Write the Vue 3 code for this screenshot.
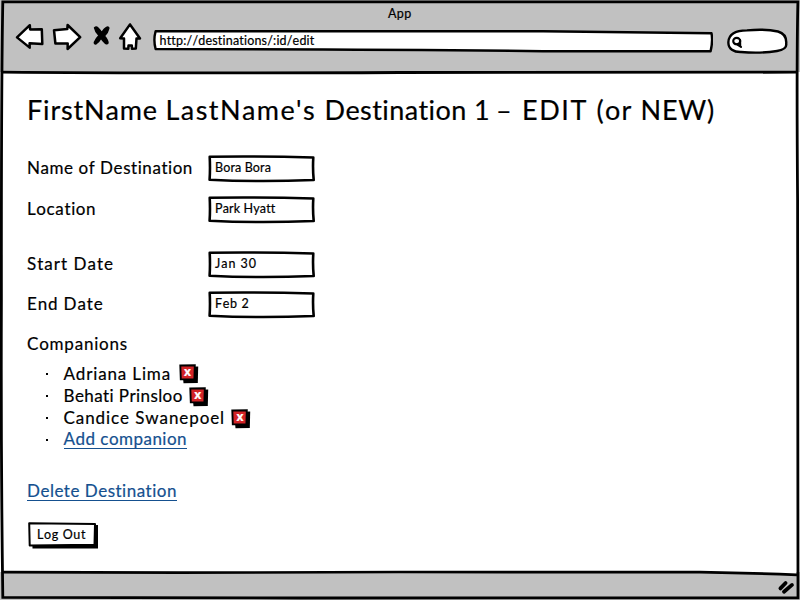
<script setup>
import { ref } from 'vue'

// Tracks a run of text out (or in) to the given advance width in pixels.
const vFit = {
  mounted(el, { value }) {
    const apply = () => {
      el.style.letterSpacing = '0px'
      const natural = el.getBoundingClientRect().width
      el.style.letterSpacing = (value - natural) / el.textContent.length + 'px'
    }
    apply()
    document.fonts.ready.then(apply)
  },
}

const heading = [
  { text: 'FirstName ', width: 138.5 },
  { text: "LastName's ", width: 159 },
  { text: 'Destination ', width: 150.5 },
  { text: '1 ', width: 22 },
  { text: '– ', width: 26 },
  { text: 'EDIT ', width: 74.5 },
  { text: '(or ', width: 44 },
  { text: 'NEW)', width: 74.5 },
]

const fields = ref([
  { label: 'Name of Destination', labelWidth: 166.5, value: 'Bora Bora', valueWidth: 56 },
  { label: 'Location', labelWidth: 69.5, value: 'Park Hyatt', valueWidth: 60 },
  { label: 'Start Date', labelWidth: 87, value: 'Jan 30', valueWidth: 42 },
  { label: 'End Date', labelWidth: 76.5, value: 'Feb 2', valueWidth: 34.5 },
])

const companions = ref([
  { name: 'Adriana Lima', width: 107.5 },
  { name: 'Behati Prinsloo', width: 119.5 },
  { name: 'Candice Swanepoel', width: 161.5 },
])

function remove(i) {
  companions.value.splice(i, 1)
}
</script>

<template>
  <div class="window">
    <header class="chrome">
      <div class="title"><span v-fit="23.5">App</span></div>
      <div class="toolbar">
        <svg class="nav" width="132" height="32" viewBox="14 21 132 32">
          <g fill="#fff" stroke="#000" stroke-width="2.5" stroke-linejoin="round" stroke-linecap="round">
            <path d="M29.8 25.2 L17 37.4 L29.7 47.6 L29.6 43.3 L42.3 44 L41.8 29.3 L30.1 29.4 Z" />
            <path d="M54 30.2 L67.3 29.1 L67.6 25 L80.2 37.2 L67.6 49 L67.7 43.6 L55.4 43.5 Z" />
            <path d="M130 24.4 L120.2 38.3 L124 38.6 L124 48.5 L128.3 48.7 L128.5 45.6 L131.8 45.4 L132 48.7 L135.8 48.6 L136.5 38.6 L140 38.4 Z" />
          </g>
          <path d="M94.6 27.8 Q96.2 26.4 98 28 Q100.8 30.5 101.7 33 Q104 28.4 107 27.2 Q109 26.8 108.8 28.4 Q107.8 33 104.4 36 Q107.9 39.8 108 43 Q107.3 44.4 105.5 43.4 Q102.8 41.2 101 38.2 Q98.8 42.4 95.7 44 Q94.2 43.9 94.4 42.3 Q96 38.5 99 35.6 Q95.2 31.5 94.6 27.8 Z" stroke="#000" stroke-width="1.5" />
        </svg>
        <div class="address">
          <svg class="sketch" viewBox="0 0 560 24">
            <path d="M2.6 2.3 Q280 2 390 2.3 L558.5 4.2 Q560 12 557.6 22.2 L390 22.2 Q230 20.2 2.6 20 Q.2 11 2.6 2.3 Z" fill="#fff" stroke="#000" stroke-width="2.4" stroke-linejoin="round" />
          </svg>
          <span v-fit="155">http://destinations/:id/edit</span>
        </div>
        <svg class="search" width="62" height="28" viewBox="726 27 62 28">
          <path d="M728.4 42 C728.8 34 735 30.5 747 30.4 Q765 28.6 778 31.5 Q787 34 786.2 44 Q787 49.5 777 51 Q761 53.6 741 52 C734 52.2 728 49 728.4 42 Z" fill="#fff" stroke="#000" stroke-width="2.4" />
          <ellipse cx="736.7" cy="41.1" rx="3.5" ry="3.2" fill="none" stroke="#000" stroke-width="2.1" />
          <path d="M737 44.3 L741 46.9 M740.1 40 L740.2 45.4" fill="none" stroke="#000" stroke-width="2.1" stroke-linecap="round" />
        </svg>
      </div>
    </header>

    <main class="page">
      <h1><span v-for="part in heading" :key="part.text" v-fit="part.width">{{ part.text }}</span></h1>

      <div class="form">
        <label v-for="field in fields" :key="field.label" class="field">
          <span class="label"><span v-fit="field.labelWidth">{{ field.label }}</span></span>
          <span class="input">
            <svg class="sketch" viewBox="0 0 107 28">
              <path d="M1.7 1.7 Q55 1 105.3 2.5 Q104.6 14 105.7 25 Q50 27.2 1.6 24.7 Q2.3 14 1.7 1.7 Z" fill="#fff" stroke="#000" stroke-width="2.6" stroke-linejoin="round" />
            </svg>
            <span v-fit="field.valueWidth">{{ field.value }}</span>
          </span>
        </label>
      </div>

      <h2><span v-fit="101">Companions</span></h2>
      <ul class="companions">
        <li v-for="(c, i) in companions" :key="c.name">
          <i class="dot"></i>
          <span v-fit="c.width">{{ c.name }}</span>
          <button class="remove" @click="remove(i)">
            <svg class="sketch" viewBox="0 0 20 20">
              <path d="M3 3 L19.2 2.6 L18.8 19 L4.5 19.2 Z" />
              <path d="M1.3 1.5 L15.8 1.2 L15.4 15.4 L1.8 15.2 Z" fill="#d32427" stroke="#000" stroke-width="1.9" />
            </svg>
            <span>x</span>
          </button>
        </li>
        <li>
          <i class="dot"></i>
          <a v-fit="123.5">Add companion</a>
        </li>
      </ul>

      <a class="delete" v-fit="150.5">Delete Destination</a>

      <button class="logout">
        <svg class="sketch" viewBox="0 0 71 27">
          <path d="M4 4 L70 3 L70 26.5 L4.5 26.5 Z" />
          <path d="M1.2 1.3 L67 2 L66.5 22.8 L1.7 23.4 Z" fill="#fff" stroke="#000" stroke-width="2" stroke-linejoin="round" />
        </svg>
        <span v-fit="49">Log Out</span>
      </button>
    </main>

    <footer class="status">
      <svg class="grip" width="18" height="16" viewBox="777 579 18 16">
        <path d="M780.4 588.4 L785.6 583 M784 591.7 L792 584.9" stroke="#000" stroke-width="3.8" stroke-linecap="round" />
      </svg>
    </footer>

    <svg class="frame" viewBox="0 0 800 600" fill="none" stroke="#000">
      <path d="M700 571.5 L796 571 L796 575 L750 573.5 Z" fill="#fff" stroke="none" />
      <path d="M2.8 1.9 L400 1.9 L797.9 1.9 Q796.5 60 797.6 200 L798 597.8 L300 598 Q150 597.8 2.8 597.3 Q.8 450 1.4 300 Q1.2 90 2.8 1.9 Z" stroke-width="2.8" />
      <path d="M2 72.2 Q150 73.5 400 72.5 Q650 72.8 797 72.2" stroke-width="2.8" />
      <path d="M2 572.2 Q200 573 400 572 L700 572.2 Q750 573 797 574.8" stroke-width="2.7" />
    </svg>
  </div>
</template>

<style>
body {
  margin: 0;
  background: #fff;
}
</style>

<style scoped>
.window {
  position: relative;
  display: flex;
  flex-direction: column;
  width: 800px;
  height: 600px;
  overflow: hidden;
  background: #fff;
  color: #000;
  font-family: Lato, 'Noto Sans', sans-serif;
  font-size: 17px;
  font-kerning: none;
  -webkit-text-stroke: 0.2px currentColor;
  white-space: pre;
}
.chrome {
  box-sizing: border-box;
  height: 72px;
  padding: 4px 12px 0 14px;
  background: #c1c1c1;
  font-size: 12.5px;
}
.title {
  height: 17px;
  line-height: 20px;
  padding-left: 374px;
}
.toolbar {
  display: flex;
  align-items: flex-start;
}
.nav,
.search {
  flex: none;
  display: block;
}
.address {
  position: relative;
  width: 560px;
  height: 24px;
  box-sizing: border-box;
  margin: 8px 13px 0 7px;
  padding-left: 6.5px;
  line-height: 23px;
}
.search {
  margin-top: 6px;
}
.sketch {
  position: absolute;
  inset: 0;
  width: 100%;
  height: 100%;
}
.address span,
.input > span,
.remove span,
.logout span {
  position: relative;
}
.page {
  display: flex;
  flex-direction: column;
  align-items: flex-start;
  flex: 1;
  padding: 18px 27px 0;
}
h1 {
  height: 40px;
  margin: 0;
  font-size: 27px;
  font-weight: 400;
  line-height: 40px;
}
.form {
  display: grid;
  grid-template-rows: 41px 55px 40px 28px;
  margin-top: 25px;
}
.field {
  display: grid;
  grid-template-columns: 181px 107px;
  height: 28px;
}
.label {
  line-height: 26px;
}
.input {
  position: relative;
  padding-left: 7px;
  font-size: 12.5px;
  line-height: 25px;
}
h2 {
  margin: 13px 0 0;
  font-size: 17px;
  font-weight: 400;
  line-height: 24px;
}
.companions {
  display: grid;
  grid-template-rows: repeat(3, 22px) 22px;
  margin: 6px 0 0;
  padding: 0 0 0 18px;
  list-style: none;
}
.companions li {
  display: flex;
  align-items: center;
  height: 22px;
}
.dot {
  width: 2px;
  height: 2px;
  margin: 2px 15.5px 0 1px;
  background: #000;
}
.remove,
.logout {
  position: relative;
  padding: 0;
  border: 0;
  background: none;
  color: #000;
  font: inherit;
}
.remove {
  width: 20px;
  height: 20px;
  margin-top: 3px;
  margin-left: 6px;
  padding-right: 2px;
  color: #fff;
  font-family: 'Open Sans', sans-serif;
  font-size: 12px;
  font-weight: 700;
  line-height: 16px;
}
.companions li:first-child .remove {
  margin-top: 2px;
  margin-left: 7.5px;
}
.remove span {
  top: -2px;
}
a {
  color: #15508f;
  line-height: 19px;
  border-bottom: 1px solid #15508f;
}
.delete {
  margin-top: 31px;
}
.logout {
  width: 71px;
  height: 27px;
  margin: 21px 0 0 1px;
  padding-left: 9px;
  font-size: 12.5px;
  line-height: 23px;
  text-align: left;
}
.logout span {
  top: -1px;
}
.status {
  display: flex;
  justify-content: flex-end;
  height: 28px;
  background: #c1c1c1;
}
.grip {
  margin: 7px 5px 0 0;
}
.frame {
  position: absolute;
  inset: 0;
  width: 800px;
  height: 600px;
  pointer-events: none;
}
</style>
